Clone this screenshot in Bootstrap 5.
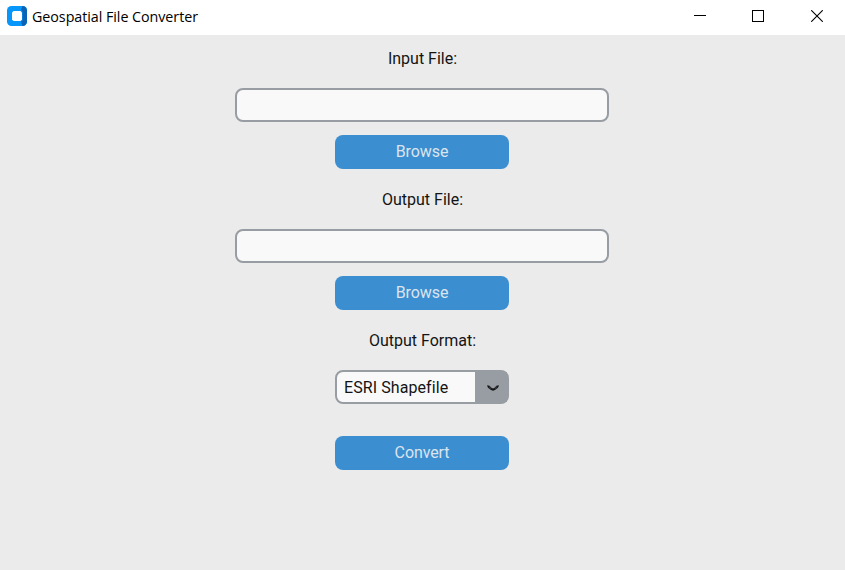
<!DOCTYPE html>
<html lang="en">
<head>
<meta charset="utf-8">
<title>Geospatial File Converter</title>
<link href="https://cdn.jsdelivr.net/npm/bootstrap@5.3.0/dist/css/bootstrap.min.css" rel="stylesheet">
<style>
body{background:#ebebeb;height:570px;overflow:hidden;font-family:Roboto,sans-serif;font-size:16px;color:#141414}
.titlebar{height:35px;background:#fff;padding-left:7px}
.app-icon{margin-top:6px}
.app-title{font-family:"Open Sans","Noto Sans",sans-serif;font-size:14.3px;color:#000;letter-spacing:-.05px;line-height:20px;margin:7px 0 0 5px}
.win-btn{width:58.500px;height:32px;padding:0 0 2px;border:0;border-radius:0;line-height:1}
.win-controls{margin-right:-1px}
.form-col{width:374px;margin-left:235px;padding-top:8px}
.field-label{height:32px;line-height:32px;margin-bottom:13px;padding-left:1px}
.path-input{height:34px;border:2px solid #979da2;border-radius:8px;background:#f9f9fa;margin-bottom:13px}
.path-input:focus{box-shadow:none;border-color:#979da2;background:#f9f9fa}
.act-btn{width:174px;height:34px;padding:0 0 1px;border:0;border-radius:8px;background:#3b8ed0;color:#dce4ee;font-size:16px;line-height:33px;letter-spacing:-.1px}
.act-btn:hover{background:#36719f;color:#dce4ee}
.group-gap{margin-bottom:15px}
.combo{width:174px;height:34px;border:2px solid #979da2;border-radius:8px;background:#f9f9fa;line-height:31px;letter-spacing:.08px;padding-left:7px;margin-bottom:32px}
.combo-arrow{width:32px;background:#979da2;padding:2px 0 0 3px}
</style>
</head>
<body>
<header class="titlebar d-flex">
<svg class="app-icon" width="20" height="20" viewBox="0 0 20 20"><rect width="20" height="20" rx="4.500" fill="#0797fb"/><path d="M15.500 0A4.500 4.500 0 0 1 20 4.500v11a4.500 4.500 0 0 1-4.500 4.500L14 16l1.500-1.500v-9L14 4z" fill="#0c62b4"/><path d="M6.500 5h7L15 6.500v7L13.500 15h-7L5 13.500v-7z" fill="#fff"/></svg>
<div class="app-title">Geospatial File Converter</div>
<div class="win-controls d-flex ms-auto">
<button class="btn win-btn" aria-label="Minimize"><svg width="12" height="12" shape-rendering="crispEdges"><path d="M0 5h12v1H0z"/></svg></button>
<button class="btn win-btn" aria-label="Maximize"><svg width="12" height="12" shape-rendering="crispEdges"><path d="M.5.5h11v11H.5z" fill="none" stroke="#000"/></svg></button>
<button class="btn win-btn" aria-label="Close"><svg width="12" height="12"><path d="M.2.2l11.600 11.600M11.800.2L.2 11.800" fill="none" stroke="#000" stroke-width="1.100"/></svg></button>
</div>
</header>
<main class="form-col d-flex flex-column align-items-center">
<label class="field-label" for="in-file">Input File:</label>
<input id="in-file" class="form-control path-input">
<button class="btn act-btn group-gap">Browse</button>
<label class="field-label" for="out-file">Output File:</label>
<input id="out-file" class="form-control path-input">
<button class="btn act-btn group-gap">Browse</button>
<div class="field-label">Output Format:</div>
<div class="combo d-flex justify-content-between"><span>ESRI Shapefile</span>
<span class="combo-arrow d-flex align-items-center justify-content-center"><svg width="12" height="6" viewBox="0 0 12 6"><path d="M0 .3L2.500.8 5 3.200h2L9.500.8 12 .3 11 2.700 8 5 6 5.700 4 5 1 2.700z" fill="#161616"/><path d="M2 1.800l2 1.700M10 1.800l-2 1.700" stroke="#63686c" stroke-width=".6"/></svg></span></div>
<button class="btn act-btn">Convert</button>
</main>
<script src="https://cdn.jsdelivr.net/npm/bootstrap@5.3.0/dist/js/bootstrap.bundle.min.js"></script>
</body>
</html>
